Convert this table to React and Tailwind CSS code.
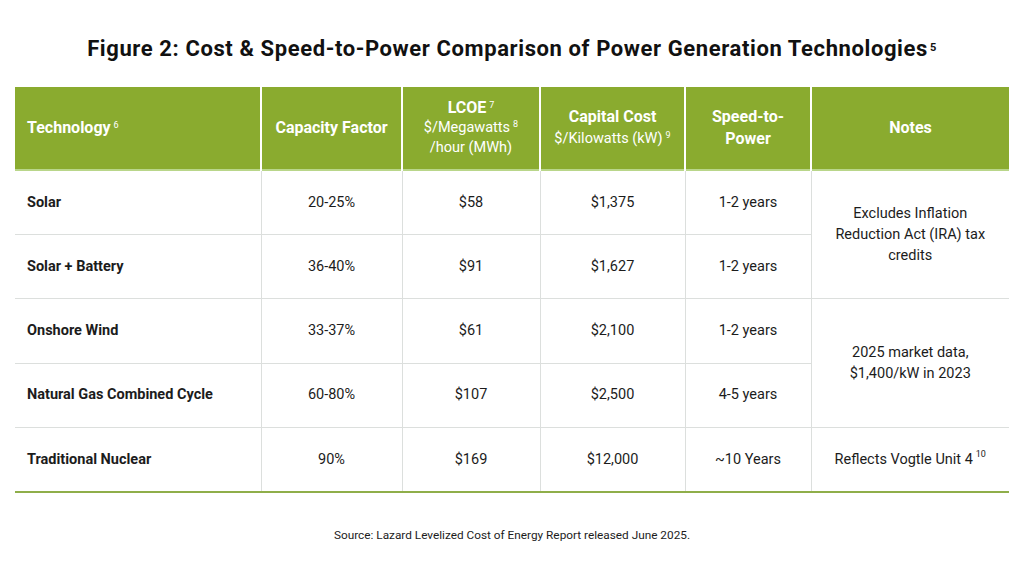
import React from "react";

const rows = [
  { tech: "Solar", cf: "20-25%", lcoe: "$58", cap: "$1,375", speed: "1-2 years" },
  { tech: "Solar + Battery", cf: "36-40%", lcoe: "$91", cap: "$1,627", speed: "1-2 years" },
  { tech: "Onshore Wind", cf: "33-37%", lcoe: "$61", cap: "$2,100", speed: "1-2 years" },
  { tech: "Natural Gas Combined Cycle", cf: "60-80%", lcoe: "$107", cap: "$2,500", speed: "4-5 years" },
  { tech: "Traditional Nuclear", cf: "90%", lcoe: "$169", cap: "$12,000", speed: "~10 Years" },
];

// notes span rows: index -> [lines, rowSpan, footnote]
const notes = {
  0: [["Excludes Inflation", "Reduction Act (IRA) tax", "credits"], 2],
  2: [["2025 market data,", "$1,400/kW in 2023"], 2],
  4: [["Reflects Vogtle Unit 4"], 1, "10"],
};

const Sup = ({ children, className = "" }) => (
  <sup className={"text-[9px] font-normal relative -top-[5px] ml-[3px] " + className}>{children}</sup>
);

export default function App() {
  const th = "border-x-2 border-white text-white font-bold text-[16px] align-middle text-center";
  const td = "border border-[#dcdfdd] text-[14.5px] text-[#1c1c1c] text-center align-middle";

  return (
    <div className="w-[1024px] h-[568px] bg-white font-['Roboto',sans-serif] flex flex-col items-center pt-[32px]">
      <h1 className="text-[22px] font-bold text-[#111] tracking-[0.6px] h-[55px]">
        Figure 2: Cost &amp; Speed-to-Power Comparison of Power Generation Technologies
        <sup className="text-[11px] relative -top-[5px] ml-[2px]">5</sup>
      </h1>

      <table className="w-[994px] table-fixed border-collapse">
        <colgroup>
          <col className="w-[246px]" />
          <col className="w-[141px]" />
          <col className="w-[138px]" />
          <col className="w-[145px]" />
          <col className="w-[126px]" />
          <col className="w-[198px]" />
        </colgroup>
        <thead>
          <tr className="h-[83px] bg-[#8aab2f] border-b-2 border-[#b9d68a]">
            <th className={th + " text-left pl-[12px] border-l-0"}>
              Technology<Sup>6</Sup>
            </th>
            <th className={th}>Capacity Factor</th>
            <th className={th + " leading-[20px]"}>
              <div>LCOE<Sup>7</Sup></div>
              <div className="font-normal text-[14.5px]">$/Megawatts<Sup>8</Sup></div>
              <div className="font-normal text-[14.5px]">/hour (MWh)</div>
            </th>
            <th className={th + " leading-[22px]"}>
              <div>Capital Cost</div>
              <div className="font-normal text-[14.5px]">
                $/Kilowatts (kW)<Sup>9</Sup>
              </div>
            </th>
            <th className={th + " leading-[22px]"}>
              <div>Speed-to-</div>
              <div>Power</div>
            </th>
            <th className={th + " border-r-0"}>Notes</th>
          </tr>
        </thead>
        <tbody>
          {rows.map((r, i) => (
            <tr key={r.tech} className={"h-[64.4px] " + (i === 4 ? "border-b-2 border-b-[#8fae4a]" : "")}>
              <td className={td + " text-left pl-[12px] font-bold border-l-0"}>{r.tech}</td>
              <td className={td}>{r.cf}</td>
              <td className={td}>{r.lcoe}</td>
              <td className={td}>{r.cap}</td>
              <td className={td}>{r.speed}</td>
              {notes[i] && (
                <td rowSpan={notes[i][1]} className={td + " border-r-0 leading-[21px]"}>
                  {notes[i][0].map((l, k) => (
                    <div key={k}>
                      {l}
                      {notes[i][2] && k === notes[i][0].length - 1 && <Sup className="-top-[7px] ml-[2px]">{notes[i][2]}</Sup>}
                    </div>
                  ))}
                </td>
              )}
            </tr>
          ))}
        </tbody>
      </table>

      <p className="mt-[34px] text-[11.8px] text-[#1c1c1c]">
        Source: Lazard Levelized Cost of Energy Report released June 2025.
      </p>
    </div>
  );
}
